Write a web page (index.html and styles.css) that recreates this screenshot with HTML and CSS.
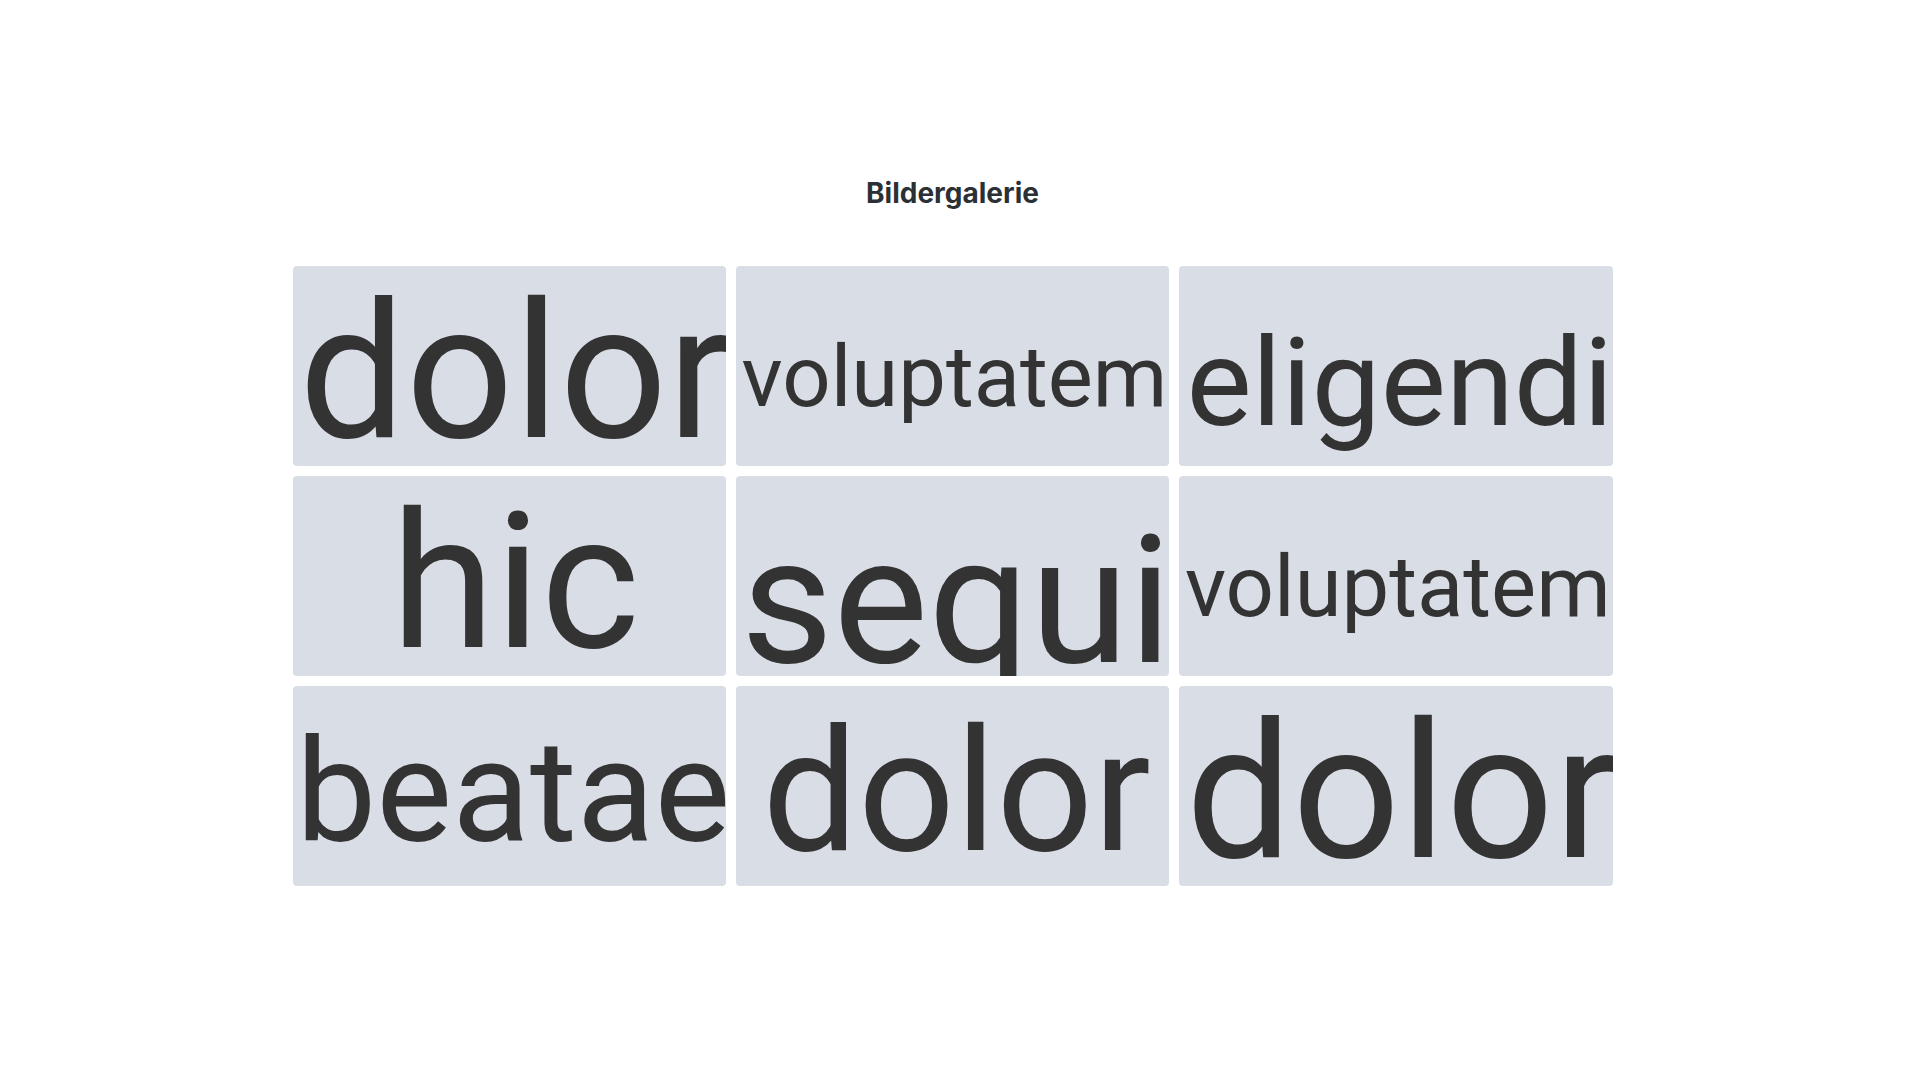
FILE: index.html
```
<!DOCTYPE html>
<html lang="de">
<head>
    <meta charset="UTF-8">
    <meta name="viewport" content="width=device-width, initial-scale=1.0">
    <link rel="stylesheet" href="styles.css">
    <title>Bildergalerie</title>
</head>
<body>
<section class="gallery">
    <h2 class="gallery-title">Bildergalerie</h2>

    <div class="gallery-grid">
        <div class="tile tile-xl">dolor</div>
        <div class="tile tile-xs">voluptatem</div>
        <div class="tile tile-sm">eligendi</div>
        <div class="tile tile-xl">hic</div>
        <div class="tile tile-low">sequi</div>
        <div class="tile tile-xs">voluptatem</div>
        <div class="tile tile-md">beatae</div>
        <div class="tile tile-lg">dolor</div>
        <div class="tile tile-xl">dolor</div>
    </div>
</section>
</body>
</html>
```
FILE: styles.css
```
/* Global */
* {
    box-sizing: border-box;
}

body {
    margin: 0;
    padding-right: 15px;
    background: #fff;
    color: #2b3035;
    font-family: Inter, "Liberation Sans", sans-serif;
}

/* Gallery */
.gallery {
    max-width: 1320px;
    margin: 0 auto;
    padding: 176px 0;
}

.gallery-title {
    margin: 0 0 56px;
    font-size: 28px;
    font-weight: 700;
    line-height: 34px;
    text-align: center;
}

.gallery-grid {
    display: grid;
    grid-template-columns: repeat(3, 1fr);
    gap: 10px;
}

/* Tiles */
.tile {
    display: flex;
    justify-content: center;
    height: 200px;
    padding-left: 8px;
    overflow: hidden;
    border-radius: 4px;
    background: #d9dde6;
    color: #333;
    font-family: Roboto, sans-serif;
}

.tile-xl {
    padding-left: 12px;
    font-size: 189px;
    line-height: 214px;
}

.tile-lg {
    font-size: 170px;
    line-height: 213px;
}

.tile-md {
    font-size: 143px;
    line-height: 213px;
}

.tile-sm {
    font-size: 123px;
    line-height: 235px;
}

.tile-xs {
    padding-left: 4px;
    font-size: 85px;
    line-height: 222px;
}

/* descender runs over the lower edge */
.tile-low {
    font-size: 179px;
    line-height: 250px;
}
```
